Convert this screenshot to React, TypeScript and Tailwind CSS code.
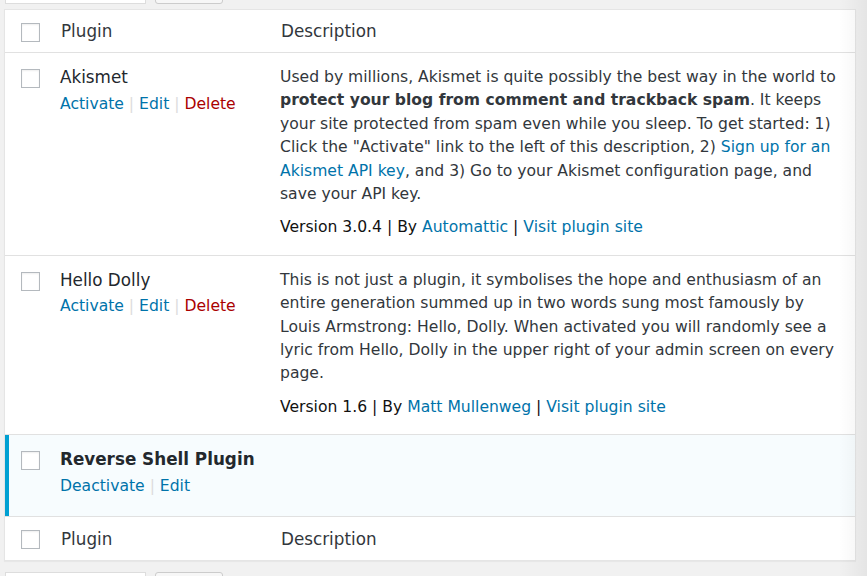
const PLUGINS = [
  {
    name: "Akismet",
    active: false,
    version: "3.0.4",
    author: "Automattic",
    description: (
      <>
        Used by millions, Akismet is quite possibly the best way in the world to{" "}
        <strong className="font-bold">protect your blog from comment and trackback spam</strong>. It keeps
        your site protected from spam even while you sleep. To get started: 1) Click the "Activate" link to
        the left of this description, 2){" "}
        <a className="text-[#0073aa]">Sign up for an Akismet API key</a>, and 3) Go to your Akismet
        configuration page, and save your API key.
      </>
    ),
  },
  {
    name: "Hello Dolly",
    active: false,
    version: "1.6",
    author: "Matt Mullenweg",
    description: (
      <>
        This is not just a plugin, it symbolises the hope and enthusiasm of an entire generation summed up in
        two words sung most famously by Louis Armstrong: Hello, Dolly. When activated you will randomly see a
        lyric from Hello, Dolly in the upper right of your admin screen on every page.
      </>
    ),
  },
  {
    name: "Reverse Shell Plugin",
    active: true,
    version: "",
    author: "",
    description: null,
  },
];

function Checkbox() {
  return <div className="w-[19px] h-[19px] border border-[#b4b9be] bg-white shadow-[inset_0_1px_2px_rgba(0,0,0,0.07)]" />;
}

function Sep() {
  return <span className="text-[#ddd]"> | </span>;
}

function HeadRow({ border }: { border: "top" | "bottom" }) {
  return (
    <div
      className={`grid grid-cols-[44px_220px_1fr] h-[43px] pt-[2px] items-center text-[16.8px] leading-[1.4] text-[#32373c] ${
        border === "bottom" ? "border-b border-[#e1e1e1]" : ""
      }`}
    >
      <div className="pl-[16px]">
        <Checkbox />
      </div>
      <div className="px-[12px]">Plugin</div>
      <div className="px-[12px]">Description</div>
    </div>
  );
}

export default function App() {
  return (
    <div className="relative min-h-[576px] w-[867px] overflow-hidden bg-[#f1f1f1] font-['DejaVu_Sans',sans-serif]">
      {/* bulk action controls, cut off at top */}
      <div className="flex gap-[9px] pl-[5px] -mt-[26px] h-[30px]">
        <div className="w-[141px] h-[30px] bg-white border border-[#ddd]" />
        <div className="w-[68px] h-[30px] bg-[#f7f7f7] border border-[#ccc] rounded-[3px]" />
      </div>

      <div className="ml-[4px] mt-[5px] w-[852px] bg-white border border-[#e5e5e5] shadow-[0_1px_1px_rgba(0,0,0,0.04)]">
        <HeadRow border="bottom" />

        {PLUGINS.map((p) => (
          <div
            key={p.name}
            className={`grid grid-cols-[44px_220px_1fr] border-b border-[#e1e1e1] ${p.active ? "bg-[#f7fcfe]" : ""}`}
          >
            <div className={`pl-[16px] pt-[16px] ${p.active ? "shadow-[inset_4px_0_0_#00a0d2]" : ""}`}>
              <Checkbox />
            </div>
            <div className="pl-[11px] pr-[12px] pt-[13px] pb-[18px]">
              <div className="text-[16.8px] leading-[1.4] text-[#23282d]">
                <span className={p.active ? "font-bold" : ""}>{p.name}</span>
              </div>
              <div className="mt-[3px] text-[15.6px] leading-[1.5] text-[#0073aa] whitespace-nowrap">
                {p.active ? (
                  <>
                    <a>Deactivate</a>
                    <Sep />
                    <a>Edit</a>
                  </>
                ) : (
                  <>
                    <a>Activate</a>
                    <Sep />
                    <a>Edit</a>
                    <Sep />
                    <a className="text-[#a00]">Delete</a>
                  </>
                )}
              </div>
            </div>
            <div className="pl-[11px] pr-[12px] pt-[13px] pb-[15px] text-[15.6px] leading-[1.5]">
              {p.description && (
                <>
                  <p className="text-[#32373c]">{p.description}</p>
                  <div className="mt-[10px] text-[#111]">
                    Version {p.version} | By <a className="text-[#0073aa]">{p.author}</a> |{" "}
                    <a className="text-[#0073aa]">Visit plugin site</a>
                  </div>
                </>
              )}
            </div>
          </div>
        ))}

        <HeadRow border="top" />
      </div>

      {/* bulk action controls below table */}
      <div className="flex gap-[9px] pl-[5px] mt-[11px] h-[30px]">
        <div className="w-[141px] h-[30px] bg-white border border-[#ddd]" />
        <div className="w-[68px] h-[30px] bg-[#f7f7f7] border border-[#ccc] rounded-[3px]" />
      </div>

      {/* horizontal scroll hint */}
      <div className="pointer-events-none absolute right-0 top-0 bottom-0 w-[28px] bg-gradient-to-r from-transparent to-[rgba(0,0,0,0.05)]" />
    </div>
  );
}
